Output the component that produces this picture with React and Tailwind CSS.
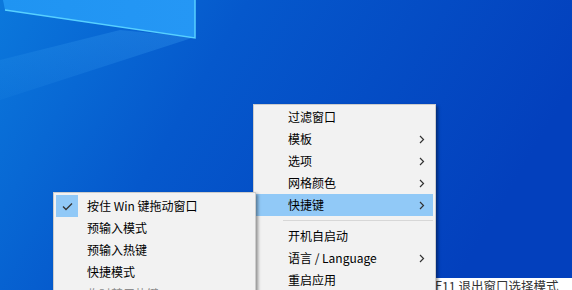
import React from 'react';

const font = "font-['Noto_Sans_CJK_SC','Noto_Sans',sans-serif]";

const Chevron = () => (
  <svg width="6" height="9" viewBox="0 0 6 9" className="mr-[8px]">
    <path d="M1 1 L4.5 4.5 L1 8" fill="none" stroke="#333" strokeWidth="1.2" />
  </svg>
);

const Check = () => (
  <svg width="11" height="9" viewBox="0 0 11 9">
    <path d="M1 4.5 L4 7.5 L10 1.5" fill="none" stroke="#333" strokeWidth="1.3" />
  </svg>
);

const MenuRow = ({ label, sub, active, disabled }) => (
  <div
    className={`flex h-[22px] items-center justify-between pl-[32px] ${
      active ? 'bg-[#91c9f7]' : ''
    }`}
  >
    <span className={`text-[12px] leading-none ${disabled ? 'text-[#8d8d8d]' : 'text-black'}`}>{label}</span>
    {sub && <Chevron />}
  </div>
);

const Wallpaper = () => (
  <svg className="absolute inset-0" width="572" height="290" viewBox="0 0 572 290">
    <defs>
      <linearGradient id="bg" x1="0" y1="0" x2="1" y2="0.3">
        <stop offset="0" stopColor="#0b78dc" />
        <stop offset="0.4" stopColor="#0558cc" />
        <stop offset="1" stopColor="#0340bd" />
      </linearGradient>
      <linearGradient id="pane" x1="0" y1="0" x2="1" y2="0">
        <stop offset="0" stopColor="#1f94f2" />
        <stop offset="1" stopColor="#2597f5" />
      </linearGradient>
      <linearGradient id="beam" x1="1" y1="0" x2="0" y2="1">
        <stop offset="0" stopColor="#4fb8ff" stopOpacity="0.25" />
        <stop offset="1" stopColor="#4fb8ff" stopOpacity="0.05" />
      </linearGradient>
    </defs>
    <rect width="572" height="290" fill="url(#bg)" />
    <polygon points="195,37 0,100 0,60 120,30" fill="url(#beam)" />
    <polygon points="3,0 195,0 195,38 5,10" fill="url(#pane)" />
    <polyline points="5,10 195,38 195,0" fill="none" stroke="#57d0ff" strokeWidth="1.5" />
  </svg>
);

export default function App() {
  return (
    <div className={`relative h-[290px] w-[572px] overflow-hidden ${font}`}>
      <Wallpaper />

      <div className="absolute left-[433px] top-[278px] right-0 bottom-0 bg-white pl-[2px]">
        <span className="block text-[12.5px] leading-[9px] pt-[3px] text-[#333] whitespace-nowrap">F11 退出窗口选择模式</span>
      </div>

      <div className="absolute left-[253px] top-[104px] w-[183px] border border-[#cccccc] bg-[#f2f2f2] px-[2px] pt-[1px] shadow-[2px_2px_3px_rgba(0,0,0,0.4)]">
        <MenuRow label="过滤窗口" />
        <MenuRow label="模板" sub />
        <MenuRow label="选项" sub />
        <MenuRow label="网格颜色" sub />
        <MenuRow label="快捷键" sub active />
        <div className="py-[4px] pl-[27px]">
          <div className="h-px bg-[#d7d7d7]" />
        </div>
        <MenuRow label="开机自启动" />
        <MenuRow label="语言 / Language" sub />
        <MenuRow label="重启应用" />
      </div>

      <div className="absolute left-[53px] top-[192px] w-[203px] border border-[#cccccc] bg-[#f2f2f2] px-[1px] pt-[2px] shadow-[2px_2px_3px_rgba(0,0,0,0.4)]">
        <div className="relative">
          <div className="absolute left-[1px] top-0 flex h-[22px] w-[22px] items-center justify-center bg-[#91c9f7]">
            <Check />
          </div>
          <MenuRow label="按住 Win 键拖动窗口" />
        </div>
        <MenuRow label="预输入模式" />
        <MenuRow label="预输入热键" />
        <MenuRow label="快捷模式" />
        <MenuRow label="临时禁用热键" disabled />
      </div>
    </div>
  );
}
